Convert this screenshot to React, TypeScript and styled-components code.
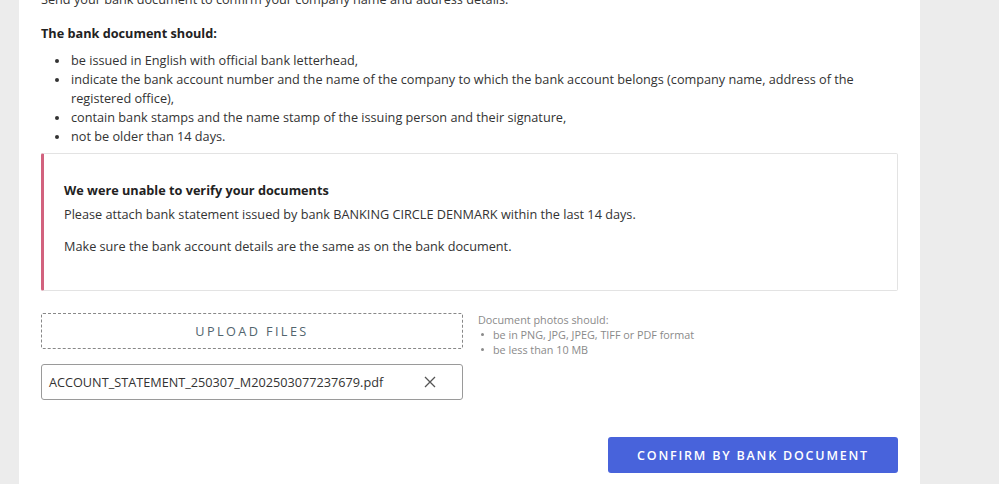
import React from 'react'
import { styled, createGlobalStyle } from 'styled-components'

const GlobalStyle = createGlobalStyle`
html, body {
  margin: 0;
  padding: 0;
  background: #ececec;
  font-family: "Open Sans", "Liberation Sans", sans-serif;
}
`

const requirements = [
    'be issued in English with official bank letterhead,',
    'indicate the bank account number and the name of the company to which the bank account belongs (company name, address of the registered office),',
    'contain bank stamps and the name stamp of the issuing person and their signature,',
    'not be older than 14 days.',
]

const photoRules = ['be in PNG, JPG, JPEG, TIFF or PDF format', 'be less than 10 MB']

const App = () => {
    return (
        <Page>
            <GlobalStyle />
            <Panel>
                <Content>
                    <Intro>Send your bank document to confirm your company name and address details.</Intro>
                    <Heading>The bank document should:</Heading>
                    <List>
                        {requirements.map((r) => (
                            <Item key={r}>{r}</Item>
                        ))}
                    </List>

                    <Callout>
                        <CalloutTitle>We were unable to verify your documents</CalloutTitle>
                        <CalloutText>
                            Please attach bank statement issued by bank BANKING CIRCLE DENMARK within the last 14 days.
                        </CalloutText>
                        <CalloutText $gap>Make sure the bank account details are the same as on the bank document.</CalloutText>
                    </Callout>

                    <UploadRow>
                        <UploadCol>
                            <UploadButton>UPLOAD FILES</UploadButton>
                            <FileBox>
                                <FileName>ACCOUNT_STATEMENT_250307_M202503077237679.pdf</FileName>
                                <Remove>
                                    <svg width="12" height="12" viewBox="0 0 12 12">
                                        <path d="M1 1 L11 11 M11 1 L1 11" stroke="#555" strokeWidth="1.3" fill="none" />
                                    </svg>
                                </Remove>
                            </FileBox>
                        </UploadCol>
                        <Note>
                            <NoteTitle>Document photos should:</NoteTitle>
                            <NoteList>
                                {photoRules.map((r) => (
                                    <NoteItem key={r}>{r}</NoteItem>
                                ))}
                            </NoteList>
                        </Note>
                    </UploadRow>

                    <Footer>
                        <Confirm>CONFIRM BY BANK DOCUMENT</Confirm>
                    </Footer>
                </Content>
            </Panel>
        </Page>
    )
}

export default App

const Page = styled.div`
display: flex;
height: 484px;
overflow: hidden;
padding-left: 19px;
`

const Panel = styled.div`
width: 901px;
background: #fff;
padding: 0 22px;
box-sizing: border-box;
`

const Content = styled.div`
margin-top: -10px;
width: 857px;
color: #333;
font-size: 12.7px;
line-height: 19px;
`

const Intro = styled.div``

const Heading = styled.div`
font-weight: 700;
margin-top: 15px;
color: #222;
`

const List = styled.ul`
margin: 8px 0 0;
padding: 0 0 0 30px;
list-style: none;
`

const Item = styled.li`
position: relative;
padding-right: 10px;
&::before {
  content: "";
  position: absolute;
  left: -16px;
  top: 8px;
  width: 4px;
  height: 4px;
  border-radius: 50%;
  background: #333;
}
`

const Callout = styled.div`
margin-top: 7px;
height: 138px;
box-sizing: border-box;
border: 1px solid #e3e3e3;
border-left: 3px solid #d2627e;
border-radius: 2px;
padding: 27px 20px 0;
`

const CalloutTitle = styled.div`
font-weight: 700;
color: #222;
`

const CalloutText = styled.div<{ $gap?: boolean }>`
margin-top: ${(p) => (p.$gap ? '13px' : '5px')};
`

const UploadRow = styled.div`
display: flex;
margin-top: 22px;
gap: 15px;
`

const UploadCol = styled.div`
width: 422px;
display: flex;
flex-direction: column;
gap: 15px;
`

const UploadButton = styled.div`
height: 36px;
box-sizing: border-box;
border: 1px dashed #888;
border-radius: 2px;
display: flex;
align-items: center;
justify-content: center;
letter-spacing: 2.4px;
font-size: 12.7px;
color: #52656e;
`

const FileBox = styled.div`
height: 36px;
box-sizing: border-box;
border: 1px solid #9a9a9a;
border-radius: 3px;
display: flex;
align-items: center;
padding: 0 26px 0 7px;
justify-content: space-between;
`

const FileName = styled.div`
color: #333;
`

const Remove = styled.div`
display: flex;
align-items: center;
`

const Note = styled.div`
font-size: 10.8px;
line-height: 15px;
color: #8a8a8a;
margin-top: -1px;
`

const NoteTitle = styled.div``

const NoteList = styled.ul`
margin: 0;
padding: 0 0 0 15px;
list-style: none;
`

const NoteItem = styled.li`
position: relative;
&::before {
  content: "";
  position: absolute;
  left: -12px;
  top: 6px;
  width: 3px;
  height: 3px;
  border-radius: 50%;
  background: #8a8a8a;
}
`

const Footer = styled.div`
display: flex;
justify-content: flex-end;
margin-top: 37px;
`

const Confirm = styled.div`
width: 290px;
height: 36px;
background: #4863db;
border-radius: 3px;
color: #fff;
font-weight: 600;
font-size: 12.5px;
letter-spacing: 1.8px;
display: flex;
align-items: center;
justify-content: center;
`
